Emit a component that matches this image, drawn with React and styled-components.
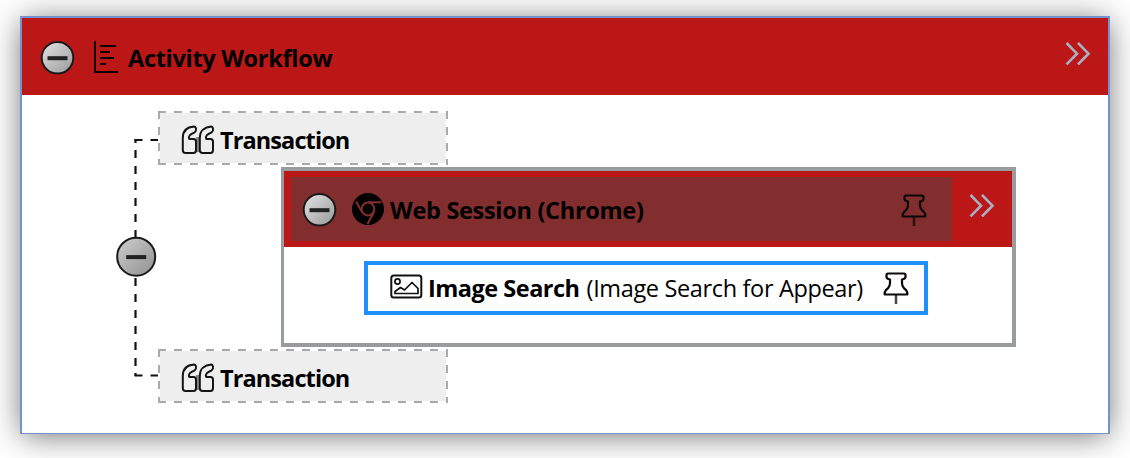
import React from "react";
import styled, { createGlobalStyle } from "styled-components";

const GlobalStyle = createGlobalStyle`
  body {
    margin: 0;
    background: #fff;
    overflow: hidden;
  }
  * { box-sizing: border-box; }
  svg { display: block; flex: none; }
`;

const Page = styled.main`
  width: 1130px;
  height: 458px;
  padding: 16px 20px 24px;
  overflow: hidden;
  font-family: "Open Sans", "Noto Sans", sans-serif;
  color: #000;
`;

const Window = styled.section`
  height: 418px;
  background: #fff;
  border: 2px solid #7492cf;
  border-bottom-width: 1px;
  box-shadow: 0 3px 30px -2px rgba(0, 0, 0, 0.58);
`;

const WindowHeader = styled.header`
  display: flex;
  align-items: center;
  height: 77px;
  padding: 3px 17px 0 18px;
  background: #bc1717;
`;

const Label = styled.span`
  flex: none;
  white-space: pre;
  font-size: 23.5px;
  line-height: 32px;
  font-weight: ${(p) => (p.$light ? 400 : 700)};
  letter-spacing: ${(p) => p.$spacing || 0}px;
  margin-left: ${(p) => p.$gap || 0}px;
`;

const Expand = styled.div`
  margin-left: auto;
  padding-bottom: ${(p) => p.$lift}px;
`;

const Body = styled.div`
  display: flex;
  padding-top: 16px;
`;

const Rail = styled.div`
  width: 136px;
  padding: 28px 0 0 94px;
`;

const Steps = styled.div`
  display: flex;
  flex-direction: column;
  gap: 2px;
`;

const dash = (dir) =>
  `repeating-linear-gradient(to ${dir}, #aaa 0 8px, transparent 8px 16px)`;

const Transaction = styled.div`
  display: flex;
  align-items: center;
  width: 290px;
  height: 54px;
  padding: 3px 0 0 23px;
  background:
    ${dash("right")} 0 0 / 100% 2px no-repeat,
    ${dash("right")} 0 100% / 100% 2px no-repeat,
    ${dash("bottom")} 0 0 / 2px 100% no-repeat,
    ${dash("bottom")} 100% 0 / 2px 100% no-repeat,
    linear-gradient(#eee, #eee) 50% 50% / 286px 50px no-repeat;
`;

const Session = styled.section`
  width: 735px;
  height: 180px;
  margin-left: 123px;
  border: 4px solid #999c9c;
  border-left-width: 3px;
  background: #fff;
`;

const SessionHeader = styled.header`
  display: flex;
  align-items: center;
  height: 76px;
  padding: 0 17px 0 7px;
  background: #bc1717;
`;

const SessionTitle = styled.div`
  display: flex;
  align-items: center;
  width: 661px;
  height: 64px;
  padding: 2px 25px 0 11px;
  background: #822e2e;
`;

const Item = styled.div`
  display: flex;
  align-items: center;
  width: 564px;
  height: 54px;
  margin: 14px 0 0 80px;
  padding: 0 15px 0 22px;
  border: 4px solid #1e90ff;
`;

const Push = styled.div`
  margin-left: auto;
`;

const IconSlot = styled.div`
  margin-left: ${(p) => p.$left || 0}px;
  margin-top: ${(p) => p.$top || 0}px;
`;

function ToggleArt({ cx, cy, r, dark }) {
  const id = `ball${cx}-${cy}-${r}`;
  return (
    <g>
      <linearGradient id={id} x1="0" y1="0" x2="1" y2="1">
        <stop offset="0.1" stopColor={dark ? "#c8c8c8" : "#dcdcdc"} />
        <stop offset="0.9" stopColor={dark ? "#969696" : "#a0a0a0"} />
      </linearGradient>
      <circle cx={cx} cy={cy} r={r} fill={`url(#${id})`} stroke="#1a1a1a" strokeWidth="2" />
      <rect x={cx - 10} y={cy - 1.6} width="20" height="4" fill="#222" />
    </g>
  );
}

const Toggle = () => (
  <svg width="36" height="36">
    <ToggleArt cx={17.5} cy={17.8} r={15.8} />
  </svg>
);

const OutlineIcon = () => (
  <svg width="26" height="34" fill="none" stroke="#0c0404" strokeWidth="2">
    <path d="M2 0V31H25M7 5H23M7 11H17M7 17H21M7 23H13" />
  </svg>
);

const Chevrons = () => (
  <svg width="26" height="24" fill="none" stroke="#a9b2c5" strokeWidth="2.6">
    <path d="M1.5 1L12 11.7L1.5 22.4M13 1L23.5 11.7L13 22.4" />
  </svg>
);

const QuoteIcon = () => (
  <svg width="34" height="30" fill="none" stroke="#151515" strokeWidth="2" strokeLinejoin="round">
    <rect x="15" y="12" width="3.5" height="15" fill="#888" stroke="none" />
    <path d="M13 1.5C6 2 1.8 6 1.8 13V25Q1.8 28 4.5 28H12.5Q15 28 15 25V16.5Q15 14 12.5 14H8.2C7 11 9.5 9 13.5 7.5Q15.5 6 15 3.5Q14.500 1.500 13 1.500Z" />
    <path d="M30.500 1.500C23.500 2 18.800 6 18.800 13V25Q18.800 28 21.500 28H29.500Q32 28 32 25V16.500Q32 14 29.500 14H25.200C24 11 26.500 9 30.500 7.500Q32.500 6 32 3.500Q31.500 1.500 30.500 1.500Z" />
  </svg>
);

const ChromeIcon = () => (
  <svg width="32" height="32" viewBox="0 0 32 32" fill="none">
    <circle cx="16" cy="16" r="16" fill="#000" />
    <g stroke="#822e2e" strokeWidth="2">
      <circle cx="16" cy="16" r="6.4" />
      <path d="M16 9.200H29.500M10.200 19.200L4 8.500M21.800 19.200L15.500 31" />
    </g>
  </svg>
);

const PinIcon = () => (
  <svg width="26" height="33" fill="none" stroke="#0c0808" strokeWidth="2.200" strokeLinejoin="round">
    <path d="M5 1.500H21Q22.500 1.500 22.500 3V5Q22.500 7 19 7.500V11Q19 15 23 18Q24.500 19.500 24.300 22.500H1.700Q1.500 19.500 3 18Q7 15 7 11V7.500Q3.500 7 3.500 5V3Q3.500 1.500 5 1.500Z" />
    <path d="M13 23V32" strokeOpacity="0.750" strokeWidth="2.500" />
  </svg>
);

const PictureIcon = () => (
  <svg width="33" height="26" fill="none" stroke="#111" strokeWidth="2">
    <rect x="1.300" y="1.600" width="30" height="22" rx="2.500" />
    <circle cx="7.500" cy="7.500" r="2.600" strokeWidth="1.700" />
    <path d="M5 19.500V17.500L10.500 13.500L14.500 16L22 8.500L28 14.500V19.500Z" strokeWidth="1.700" strokeLinejoin="round" />
  </svg>
);

const Connector = () => (
  <svg width="42" height="238">
    <g fill="none" stroke="#111" strokeWidth="2.200" strokeDasharray="8 8">
      <path d="M18.500 1H42" />
      <path d="M19.500 11V98" />
      <path d="M19.500 139V230" />
      <path d="M18.500 236.500H42" />
      <path d="M19.500 0V4M19.500 234V237" />
    </g>
    <ToggleArt cx={20.2} cy={117.7} r={19} dark />
  </svg>
);

const TransactionRow = () => (
  <Transaction>
    <QuoteIcon />
    <Label $gap={5} $spacing={-0.9}>Transaction</Label>
  </Transaction>
);

export default function App() {
  return (
    <Page>
      <GlobalStyle />
      <Window>
        <WindowHeader>
          <Toggle />
          <IconSlot $left={17}><OutlineIcon /></IconSlot>
          <Label $gap={9} $spacing={-0.3}>Activity Workflow</Label>
          <Expand $lift={8}><Chevrons /></Expand>
        </WindowHeader>
        <Body>
          <Rail><Connector /></Rail>
          <Steps>
            <TransactionRow />
            <Session>
              <SessionHeader>
                <SessionTitle>
                  <Toggle />
                  <IconSlot $left={14} $top={-3}><ChromeIcon /></IconSlot>
                  <Label $gap={6} $spacing={-0.3}>Web Session (Chrome)</Label>
                  <Push><PinIcon /></Push>
                </SessionTitle>
                <Expand $lift={6}><Chevrons /></Expand>
              </SessionHeader>
              <Item>
                <IconSlot $top={-2}><PictureIcon /></IconSlot>
                <Label $gap={5} $spacing={-0.5}>Image Search</Label>
                <Label $light $gap={7} $spacing={-0.35}>(Image Search for Appear)</Label>
                <Push><PinIcon /></Push>
              </Item>
            </Session>
            <TransactionRow />
          </Steps>
        </Body>
      </Window>
    </Page>
  );
}
